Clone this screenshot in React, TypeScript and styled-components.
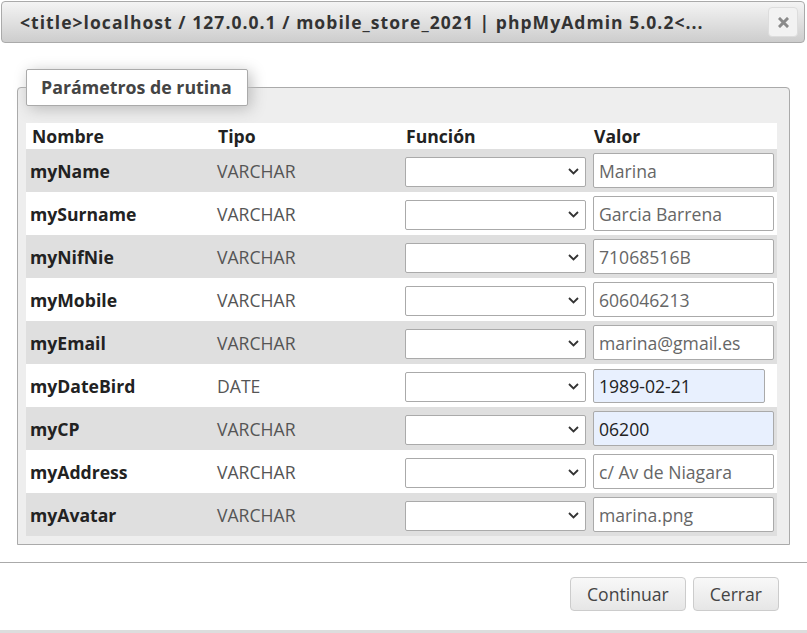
import React, { FC } from 'react';
import styled, { createGlobalStyle } from 'styled-components';

const GlobalStyle = createGlobalStyle`
  html, body {
    margin: 0;
    padding: 0;
    background: #fff;
    font-family: "Open Sans", "DejaVu Sans", sans-serif;
  }
`;

const Dialog = styled.div`
  width: 807px;
  height: 633px;
  display: flex;
  flex-direction: column;
  box-sizing: border-box;
  border-bottom: 3px solid #ddd;
  overflow: hidden;
`;

const TitleBar = styled.div`
  margin: 1px 2px 0 1px;
  height: 42px;
  box-sizing: border-box;
  border: 1px solid #aaa;
  border-radius: 4px;
  background: linear-gradient(#f4f4f4, #cdcdcd);
  display: flex;
  align-items: center;
  justify-content: space-between;
  padding: 0 6px 0 18px;
`;

const Title = styled.span`
  font-size: 17.5px;
  font-weight: bold;
  letter-spacing: 1.05px;
  color: #333;
  white-space: nowrap;
`;

const CloseButton = styled.button`
  width: 30px;
  height: 30px;
  border: 1px solid #ddd;
  border-radius: 4px;
  background: #f2f2f2;
  display: flex;
  align-items: center;
  justify-content: center;
  padding: 0;
`;

const Content = styled.div`
  padding: 26px 17px 0 17px;
`;

const Fieldset = styled.fieldset`
  margin: 0;
  padding: 0 10px 8px 8px;
  border: 1px solid #aaa;
  border-radius: 4px 4px 0 0;
  background: #eee;
`;

const Legend = styled.legend`
  padding: 8px 15px 8px 14px;
  border: 1px solid #aaa;
  border-radius: 2px;
  background: #fff;
  font-size: 17.8px;
  font-weight: bold;
  color: #444;
  box-shadow: 3px 3px 15px #bbb;
  line-height: 19px;
  margin-bottom: 17px;
`;

const Table = styled.table`
  width: 751px;
  border-collapse: collapse;
  table-layout: fixed;
`;

const HeadCell = styled.th`
  text-align: left;
  font-size: 17.6px;
  font-weight: bold;
  color: #222;
  background: #fff;
  height: 26px;
  padding: 0 6px;
  line-height: 26px;
`;

const Row = styled.tr<{ $odd: boolean }>`
  height: 43px;
  background: ${p => (p.$odd ? '#dfdfdf' : '#fff')};
`;

const NameCell = styled.td`
  font-size: 17.6px;
  font-weight: bold;
  color: #222;
  padding: 0 4px;
`;

const TypeCell = styled.td`
  font-size: 17.6px;
  color: #555;
  padding: 0 5px;
`;

const FieldCell = styled.td`
  padding: 0 5px;
`;

const SelectBox = styled.div`
  width: 181px;
  height: 30px;
  box-sizing: border-box;
  border: 1px solid #aaa;
  border-radius: 2px;
  background: #fff;
  display: flex;
  align-items: center;
  justify-content: flex-end;
  padding-right: 6px;
  margin-top: 2px;
`;

const ValueInput = styled.input<{ $filled?: boolean; $narrow?: boolean }>`
  width: ${p => (p.$narrow ? '172px' : '181px')};
  height: ${p => (p.$narrow ? '34px' : '35px')};
  box-sizing: border-box;
  border: 1px solid #aaa;
  border-radius: 2px;
  background: ${p => (p.$filled ? '#e8f0fe' : '#fff')};
  color: ${p => (p.$filled ? '#222' : '#666')};
  font-family: "Open Sans", "DejaVu Sans", sans-serif;
  font-size: 17.6px;
  padding: 0 5px;
  outline: none;
  display: block;
`;

const ButtonPane = styled.div`
  margin-top: 17px;
  border-top: 1px solid #aaa;
  display: flex;
  justify-content: flex-end;
  gap: 7px;
  padding: 14px 28px 0 0;
`;

const Button = styled.button`
  height: 34px;
  box-sizing: border-box;
  padding: 0 16px;
  border: 1px solid #ccc;
  border-radius: 4px;
  background: linear-gradient(#f8f8f8, #e6e6e6);
  color: #444;
  font-family: "Open Sans", "DejaVu Sans", sans-serif;
  font-size: 17.6px;
`;

const Chevron: FC = () => (
  <svg width="11" height="7" viewBox="0 0 11 7">
    <path d="M1 1l4.5 4.5L10 1" fill="none" stroke="#333" strokeWidth="1.8" />
  </svg>
);

const CloseIcon: FC = () => (
  <svg width="11" height="11" viewBox="0 0 11 11">
    <path d="M2 2l7 7M9 2l-7 7" stroke="#8a8a8a" strokeWidth="3" strokeLinecap="square" />
  </svg>
);

type Param = { name: string; type: string; value: string; filled?: boolean; narrow?: boolean };

const params: Param[] = [
  { name: 'myName', type: 'VARCHAR', value: 'Marina' },
  { name: 'mySurname', type: 'VARCHAR', value: 'Garcia Barrena' },
  { name: 'myNifNie', type: 'VARCHAR', value: '71068516B' },
  { name: 'myMobile', type: 'VARCHAR', value: '606046213' },
  { name: 'myEmail', type: 'VARCHAR', value: 'marina@gmail.es' },
  { name: 'myDateBird', type: 'DATE', value: '1989-02-21', filled: true, narrow: true },
  { name: 'myCP', type: 'VARCHAR', value: '06200', filled: true },
  { name: 'myAddress', type: 'VARCHAR', value: 'c/ Av de Niagara' },
  { name: 'myAvatar', type: 'VARCHAR', value: 'marina.png' },
];

export default function App() {
  return (
    <>
      <GlobalStyle />
      <Dialog>
        <TitleBar>
          <Title>&lt;title&gt;localhost / 127.0.0.1 / mobile_store_2021 | phpMyAdmin 5.0.2&lt;...</Title>
          <CloseButton>
            <CloseIcon />
          </CloseButton>
        </TitleBar>
        <Content>
          <Fieldset>
            <Legend>Parámetros de rutina</Legend>
            <Table>
              <colgroup>
                <col style={{ width: 186 }} />
                <col style={{ width: 188 }} />
                <col style={{ width: 188 }} />
                <col style={{ width: 189 }} />
              </colgroup>
              <thead>
                <tr>
                  <HeadCell>Nombre</HeadCell>
                  <HeadCell>Tipo</HeadCell>
                  <HeadCell>Función</HeadCell>
                  <HeadCell>Valor</HeadCell>
                </tr>
              </thead>
              <tbody>
                {params.map((p, i) => (
                  <Row key={p.name} $odd={i % 2 === 0}>
                    <NameCell>{p.name}</NameCell>
                    <TypeCell>{p.type}</TypeCell>
                    <FieldCell>
                      <SelectBox>
                        <Chevron />
                      </SelectBox>
                    </FieldCell>
                    <FieldCell>
                      <ValueInput defaultValue={p.value} $filled={p.filled} $narrow={p.narrow} />
                    </FieldCell>
                  </Row>
                ))}
              </tbody>
            </Table>
          </Fieldset>
        </Content>
        <ButtonPane>
          <Button>Continuar</Button>
          <Button>Cerrar</Button>
        </ButtonPane>
      </Dialog>
    </>
  );
}
